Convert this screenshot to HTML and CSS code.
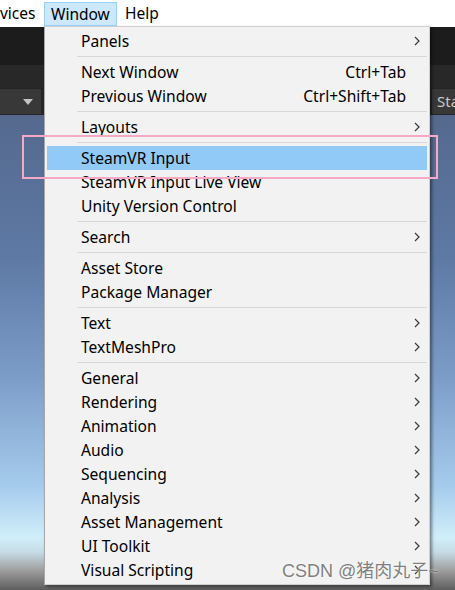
FILE: index.html
```html
<!DOCTYPE html>
<html>
<head>
<meta charset="utf-8">
<link rel="stylesheet" href="styles.css">
</head>
<body>
<div class="menubar">
  <span class="mb-item cut">vices</span>
  <span class="mb-item active">Window</span>
  <span class="mb-item help">Help</span>
</div>
<div class="scene">
  <div class="band band-dark"></div>
  <div class="band band-mid"></div>
  <div class="toolbar">
    <div class="tb-drop"><svg class="tri" width="10" height="6" viewBox="0 0 10 6"><path d="M0 0 H10 L5 6 Z" fill="#c4c4c4"/></svg></div>
    <div class="tb-sta">Sta</div>
  </div>
  <div class="sky"></div>
</div>

<div class="menu">
  <div class="row"><span class="label">Panels</span><span class="arrow"><svg width="6" height="10" viewBox="0 0 6 10"><path d="M1 1 L5 5 L1 9" fill="none" stroke="#3a3a3a" stroke-width="1.2"/></svg></span></div>
  <div class="sep"></div>
  <div class="row"><span class="label">Next Window</span><span class="key">Ctrl+Tab</span><span class="arrow"></span></div>
  <div class="row"><span class="label">Previous Window</span><span class="key">Ctrl+Shift+Tab</span><span class="arrow"></span></div>
  <div class="sep"></div>
  <div class="row"><span class="label">Layouts</span><span class="arrow"><svg width="6" height="10" viewBox="0 0 6 10"><path d="M1 1 L5 5 L1 9" fill="none" stroke="#3a3a3a" stroke-width="1.2"/></svg></span></div>
  <div class="sep"></div>
  <div class="row selected"><span class="label">SteamVR Input</span><span class="arrow"></span></div>
  <div class="row"><span class="label">SteamVR Input Live View</span><span class="arrow"></span></div>
  <div class="row"><span class="label">Unity Version Control</span><span class="arrow"></span></div>
  <div class="sep"></div>
  <div class="row"><span class="label">Search</span><span class="arrow"><svg width="6" height="10" viewBox="0 0 6 10"><path d="M1 1 L5 5 L1 9" fill="none" stroke="#3a3a3a" stroke-width="1.2"/></svg></span></div>
  <div class="sep"></div>
  <div class="row"><span class="label">Asset Store</span><span class="arrow"></span></div>
  <div class="row"><span class="label">Package Manager</span><span class="arrow"></span></div>
  <div class="sep"></div>
  <div class="row"><span class="label">Text</span><span class="arrow"><svg width="6" height="10" viewBox="0 0 6 10"><path d="M1 1 L5 5 L1 9" fill="none" stroke="#3a3a3a" stroke-width="1.2"/></svg></span></div>
  <div class="row"><span class="label">TextMeshPro</span><span class="arrow"><svg width="6" height="10" viewBox="0 0 6 10"><path d="M1 1 L5 5 L1 9" fill="none" stroke="#3a3a3a" stroke-width="1.2"/></svg></span></div>
  <div class="sep"></div>
  <div class="row"><span class="label">General</span><span class="arrow"><svg width="6" height="10" viewBox="0 0 6 10"><path d="M1 1 L5 5 L1 9" fill="none" stroke="#3a3a3a" stroke-width="1.2"/></svg></span></div>
  <div class="row"><span class="label">Rendering</span><span class="arrow"><svg width="6" height="10" viewBox="0 0 6 10"><path d="M1 1 L5 5 L1 9" fill="none" stroke="#3a3a3a" stroke-width="1.2"/></svg></span></div>
  <div class="row"><span class="label">Animation</span><span class="arrow"><svg width="6" height="10" viewBox="0 0 6 10"><path d="M1 1 L5 5 L1 9" fill="none" stroke="#3a3a3a" stroke-width="1.2"/></svg></span></div>
  <div class="row"><span class="label">Audio</span><span class="arrow"><svg width="6" height="10" viewBox="0 0 6 10"><path d="M1 1 L5 5 L1 9" fill="none" stroke="#3a3a3a" stroke-width="1.2"/></svg></span></div>
  <div class="row"><span class="label">Sequencing</span><span class="arrow"><svg width="6" height="10" viewBox="0 0 6 10"><path d="M1 1 L5 5 L1 9" fill="none" stroke="#3a3a3a" stroke-width="1.2"/></svg></span></div>
  <div class="row"><span class="label">Analysis</span><span class="arrow"><svg width="6" height="10" viewBox="0 0 6 10"><path d="M1 1 L5 5 L1 9" fill="none" stroke="#3a3a3a" stroke-width="1.2"/></svg></span></div>
  <div class="row"><span class="label">Asset Management</span><span class="arrow"><svg width="6" height="10" viewBox="0 0 6 10"><path d="M1 1 L5 5 L1 9" fill="none" stroke="#3a3a3a" stroke-width="1.2"/></svg></span></div>
  <div class="row"><span class="label">UI Toolkit</span><span class="arrow"><svg width="6" height="10" viewBox="0 0 6 10"><path d="M1 1 L5 5 L1 9" fill="none" stroke="#3a3a3a" stroke-width="1.2"/></svg></span></div>
  <div class="row"><span class="label">Visual Scripting</span><span class="arrow"><svg width="6" height="10" viewBox="0 0 6 10"><path d="M1 1 L5 5 L1 9" fill="none" stroke="#3a3a3a" stroke-width="1.2"/></svg></span></div>
</div>

<div class="annotation"></div>
<div class="watermark">CSDN @猪肉丸子~</div>
</body>
</html>
```

FILE: styles.css
```css
html, body {
  margin: 0;
  padding: 0;
}
body {
  width: 455px;
  height: 590px;
  overflow: hidden;
  position: relative;
  background: #ffffff;
  font-family: "Noto Sans", "Noto Sans CJK SC", sans-serif;
  color: #000;
}

/* top menubar */
.menubar {
  height: 27px;
  display: flex;
  align-items: center;
  background: #ffffff;
  font-size: 15.5px;
}
.mb-item {
  box-sizing: border-box;
  height: 24px;
  line-height: 22px;
  display: inline-block;
  white-space: nowrap;
}
.cut {
  width: 44px;
  padding-left: 0;
}
.active {
  width: 73px;
  padding-left: 6px;
  background: #cce8ff;
  border: 1px solid #99d1ff;
}
.help {
  padding-left: 8px;
}

/* editor scene behind the menu */
.scene {
  display: flex;
  flex-direction: column;
  height: 563px;
}
.band-dark {
  height: 38px;
  background: #1c1c1c;
}
.band-mid {
  height: 23px;
  background: #282828;
}
.toolbar {
  height: 27px;
  display: flex;
  justify-content: space-between;
  background: #282828;
}
.tb-drop {
  width: 42px;
  box-sizing: border-box;
  background: #383838;
  border: 1px solid #242424;
  border-left: none;
  display: flex;
  align-items: center;
  justify-content: flex-end;
  padding-right: 8px;
}
.tb-sta {
  width: 24px;
  box-sizing: border-box;
  background: #383838;
  border: 1px solid #242424;
  border-right: none;
  color: #c8c8c8;
  font-size: 15px;
  line-height: 25px;
  padding-left: 5px;
  overflow: hidden;
  white-space: nowrap;
}
.sky {
  flex: 1;
  background: linear-gradient(to bottom,
    #55698e 0%,
    #5d79a4 30%,
    #7c9cc8 55%,
    #a5cbec 78%,
    #d0eefa 89%,
    #c6dce6 92%,
    #9c9c9c 96%,
    #5e5e5e 100%);
}

/* dropdown menu */
.menu {
  position: absolute;
  left: 44px;
  top: 26px;
  width: 386px;
  box-sizing: border-box;
  padding: 2px 0;
  background: #f2f2f2;
  border: 1px solid #cfcfcf;
  border-left-color: #a8a8a8;
  box-shadow: 2px 2px 3px rgba(0, 0, 0, 0.45);
  font-size: 15.6px;
}
.row {
  display: flex;
  align-items: center;
  height: 24px;
  margin: 0 2px;
  padding-left: 34px;
  white-space: nowrap;
}
.row.selected {
  background: #91c9f7;
}
.label {
  flex: 1;
}
.key {
  text-align: right;
}
.arrow {
  width: 21px;
  display: flex;
  align-items: center;
  padding-left: 8px;
  box-sizing: border-box;
}
.sep {
  height: 1px;
  background: #d7d7d7;
  margin: 3px 2px 3px 32px;
}

/* annotation + watermark overlays */
.annotation {
  position: absolute;
  left: 22px;
  top: 135px;
  width: 416px;
  height: 44px;
  box-sizing: border-box;
  border: 2.5px solid #f6a8c6;
}
.watermark {
  position: absolute;
  left: 282px;
  top: 560px;
  font-family: "Liberation Sans", "Noto Sans CJK SC", sans-serif;
  font-size: 18px;
  line-height: 22px;
  color: rgba(105, 105, 105, 0.85);
  text-shadow: 0 0 2px rgba(255, 255, 255, 0.9);
  white-space: nowrap;
}
```
